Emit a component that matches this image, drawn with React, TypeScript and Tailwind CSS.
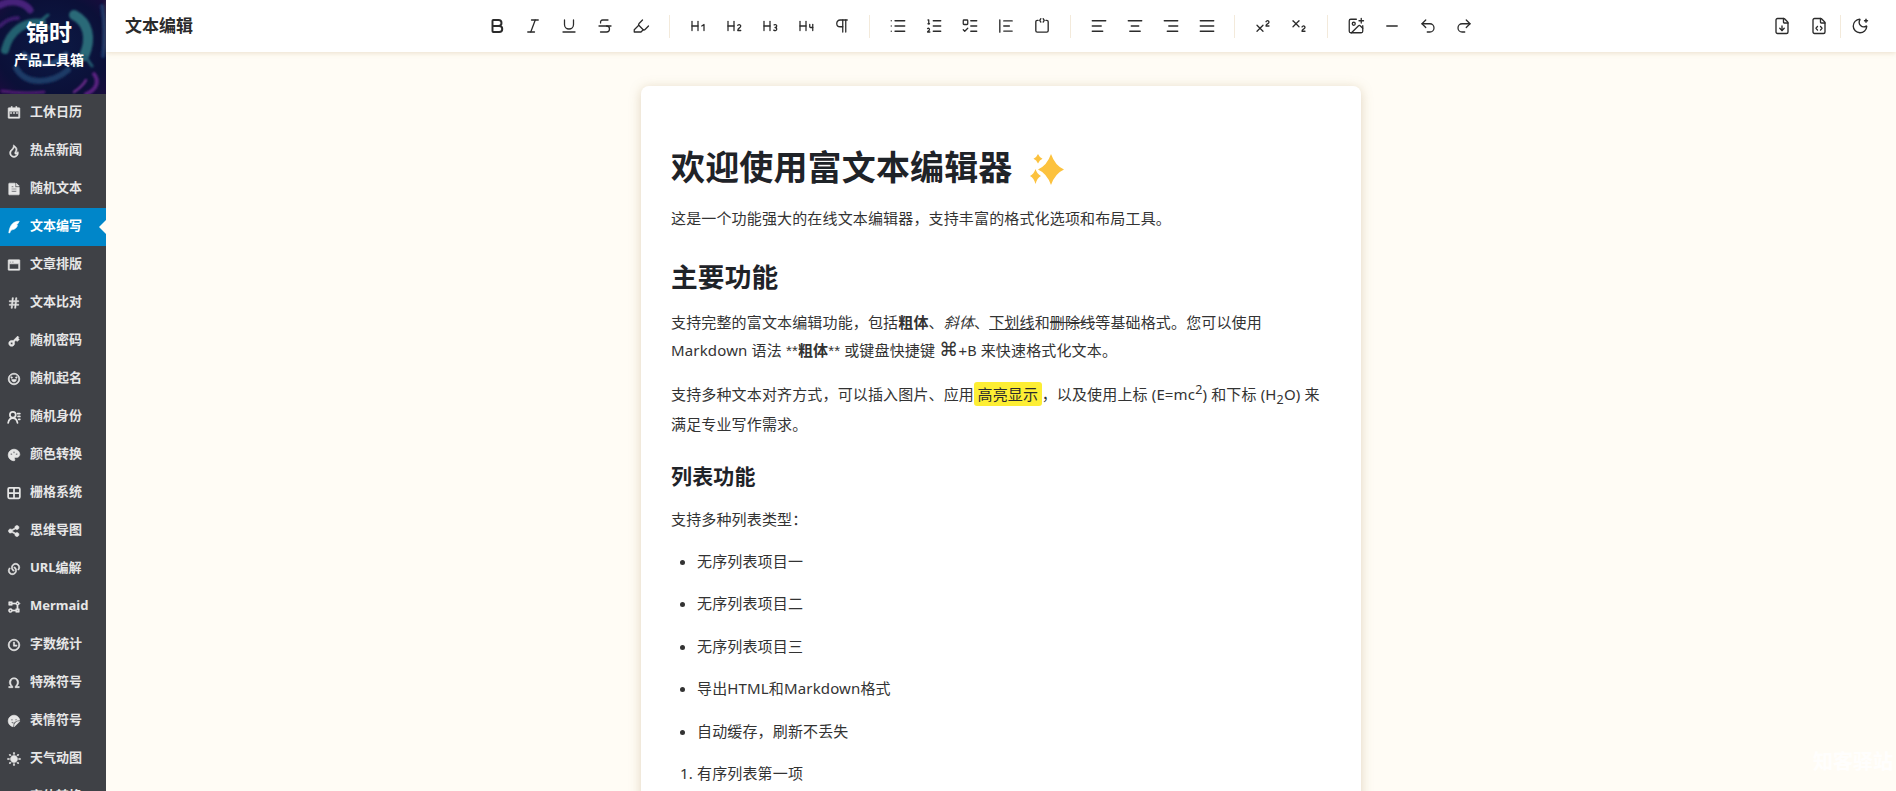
import React from 'react';
import {
  Bold, Italic, Underline, Strikethrough, Highlighter, Heading1, Heading2, Heading3, Heading4, Pilcrow,
  List, ListOrdered, ListTodo, AlignLeft, AlignCenter, AlignRight, AlignJustify, Superscript, Subscript,
  ImagePlus, Minus, Undo2, Redo2, FileDown, FileCode, MoonStar,
} from 'lucide-react';
import {
  RiCalendar2Fill, RiFireLine, RiFileTextFill, RiQuillPenFill, RiWindowFill, RiHashtag, RiKey2Fill,
  RiEmotionLine, RiPaletteFill, RiShareFill, RiLinksLine, RiFlowChart,
  RiTimeLine, RiOmega, RiEmojiStickerFill, RiSunFill, RiFontSize,
} from 'react-icons/ri';

type IconProps = { className?: string; strokeWidth?: number };

const BlockquoteIcon = ({ className }: IconProps) => (
  <svg viewBox="0 0 16 16" fill="none" stroke="currentColor" strokeWidth="1.2" strokeLinecap="round" className={className}>
    <path d="M2.500 2.500v11M6 3.500h7.500M6 8h5M6 12.500h7.500" />
  </svg>
);

const CodeBlockIcon = ({ className }: IconProps) => (
  <svg viewBox="0 0 16 16" fill="none" stroke="currentColor" strokeWidth="1.2" strokeLinecap="round" strokeLinejoin="round" className={className}>
    <path d="M4.500 3H3.800A1.300 1.300 0 0 0 2.500 4.300v7.900a1.300 1.300 0 0 0 1.300 1.300h8.400a1.300 1.300 0 0 0 1.300-1.300V4.300A1.300 1.300 0 0 0 12.200 3h-.7" />
    <path d="M7 1.500 6 3l1 1.500M9 1.500 10 3 9 4.500" />
  </svg>
);

const UserListIcon = ({ className }: IconProps) => (
  <svg viewBox="0 0 24 24" fill="none" stroke="currentColor" strokeWidth="3" strokeLinecap="round" className={className}>
    <circle cx="10" cy="8" r="5" />
    <path d="M2 22c1-5 4-8 8-8s7 3 8 8M18 6h4M19 11h3M20 16h2" />
  </svg>
);

const GridIcon = ({ className }: IconProps) => (
  <svg viewBox="0 0 24 24" fill="none" stroke="currentColor" strokeWidth="3" className={className}>
    <rect x="2" y="3" width="20" height="18" rx="2" />
    <path d="M12 3v18M2 12h20" />
  </svg>
);

const toolGroups = [
  [Bold, Italic, Underline, Strikethrough, Highlighter],
  [Heading1, Heading2, Heading3, Heading4, Pilcrow],
  [List, ListOrdered, ListTodo, BlockquoteIcon, CodeBlockIcon],
  [AlignLeft, AlignCenter, AlignRight, AlignJustify],
  [Superscript, Subscript],
  [ImagePlus, Minus, Undo2, Redo2],
];

const navItems = [
  { label: '工休日历', icon: RiCalendar2Fill },
  { label: '热点新闻', icon: RiFireLine },
  { label: '随机文本', icon: RiFileTextFill },
  { label: '文本编写', icon: RiQuillPenFill, active: true },
  { label: '文章排版', icon: RiWindowFill },
  { label: '文本比对', icon: RiHashtag },
  { label: '随机密码', icon: RiKey2Fill },
  { label: '随机起名', icon: RiEmotionLine },
  { label: '随机身份', icon: UserListIcon },
  { label: '颜色转换', icon: RiPaletteFill },
  { label: '栅格系统', icon: GridIcon },
  { label: '思维导图', icon: RiShareFill },
  { label: 'URL编解', icon: RiLinksLine },
  { label: 'Mermaid', icon: RiFlowChart },
  { label: '字数统计', icon: RiTimeLine },
  { label: '特殊符号', icon: RiOmega },
  { label: '表情符号', icon: RiEmojiStickerFill },
  { label: '天气动图', icon: RiSunFill },
  { label: '字体转换', icon: RiFontSize },
];

const LogoArt = () => (
  <svg viewBox="0 0 106 94" preserveAspectRatio="none" className="absolute inset-0 h-full w-full">
    <defs>
      <radialGradient id="logoBg" cx="50%" cy="50%" r="75%">
        <stop offset="0%" stopColor="#0c1a45" />
        <stop offset="70%" stopColor="#0b1038" />
        <stop offset="100%" stopColor="#1d0c3e" />
      </radialGradient>
      <filter id="soft"><feGaussianBlur stdDeviation="1.300" /></filter>
    </defs>
    <rect width="106" height="94" fill="url(#logoBg)" />
    <g filter="url(#soft)" fill="none" strokeLinecap="round">
      <path d="M0 5C12 -1 24 2 30 10" stroke="#46207a" strokeWidth="7" />
      <path d="M0 26C6 20 12 18 18 18" stroke="#3a1c6c" strokeWidth="4" />
      <path d="M5 50C10 30 26 20 42 23" stroke="#24606f" strokeWidth="8" />
      <path d="M38 23L48 15M40 25L50 28" stroke="#24606f" strokeWidth="3" />
      <path d="M74 15C88 22 92 38 84 56" stroke="#296a78" strokeWidth="10" />
      <path d="M84 56L76 66M85 56L92 66" stroke="#245a70" strokeWidth="3" />
      <path d="M16 68C26 86 52 84 68 70" stroke="#1d3a66" strokeWidth="6" />
      <path d="M24 54C36 68 56 66 66 54" stroke="#284a76" strokeWidth="5" />
      <path d="M94 74C100 82 96 90 86 94" stroke="#5a2180" strokeWidth="4" />
      <path d="M74 92C80 88 84 84 86 80" stroke="#6d2a8c" strokeWidth="2.500" />
      <path d="M2 91C20 94 36 93 44 92" stroke="#4d1f70" strokeWidth="3" />
      <path d="M102 6C105 24 105 40 103 56" stroke="#1a3566" strokeWidth="4" />
    </g>
  </svg>
);

const Sparkles = () => (
  <svg viewBox="0 0 34 31" className="ml-[17px] inline-block h-[31px] w-[34px] align-[-5px]">
    <path d="M21 0Q25 11.500 34 15.500Q25 19.500 21 31Q17 19.500 8 15.500Q17 11.500 21 0Z" fill="#fcc23e" />
    <path d="M8 0Q9.500 3.500 12.500 4.800Q9.500 6 8 9.500Q6.500 6 3.500 4.800Q6.500 3.500 8 0Z" fill="#fcc23e" />
    <path d="M5.500 15Q7 20 11 22Q7 24 5.500 30Q4 24 0 22Q4 20 5.500 15Z" fill="#fcc23e" />
  </svg>
);

const Sidebar = () => (
  <aside className="flex h-full w-[106px] shrink-0 flex-col overflow-hidden bg-[#3f4146]">
    <div className="relative flex h-[94px] shrink-0 flex-col items-center pr-2 pt-[17px] text-white">
      <LogoArt />
      <div className="relative text-[23px] font-bold leading-[30px]">锦时</div>
      <div className="relative mt-[3px] text-[14px] font-bold leading-[20px]">产品工具箱</div>
    </div>
    {navItems.map(({ label, icon: Icon, active }) => (
      <div
        key={label}
        className={`relative flex h-[38px] shrink-0 items-center pl-[7px] text-[13px] font-bold ${active ? 'bg-[#0086c9] text-white' : 'text-[#e6e6e6]'}`}
      >
        <Icon className="mr-[9px] h-[14px] w-[14px]" strokeWidth={1} />
        <span className="-translate-y-[1.500px]">{label}</span>
        {active && (
          <span className="absolute right-0 top-1/2 -translate-y-1/2 border-y-[7px] border-r-[7px] border-y-transparent border-r-[#fffcf5]" />
        )}
      </div>
    ))}
  </aside>
);

const Toolbar = () => (
  <header className="relative z-10 flex h-[52px] shrink-0 items-center bg-white pl-[19px] pr-[21px] shadow-[0_1px_5px_rgba(190,160,110,0.3)]">
    <h1 className="w-[357px] text-[17px] font-bold text-[#2b2b2b]">文本编辑</h1>
    <div className="flex items-center">
      {toolGroups.map((group, i) => (
        <React.Fragment key={i}>
          {i > 0 && <div className="mx-[12.750px] h-[23px] w-px bg-[#f3eadb]" />}
          <div className="flex items-center gap-[6px]">
            {group.map((Icon, j) => (
              <button key={j} className="flex h-[30px] w-[30px] items-center justify-center text-[#2b2b2b]">
                <Icon className="h-[18px] w-[18px]" strokeWidth={Icon === Bold ? 2.6 : 1.7} />
              </button>
            ))}
          </div>
        </React.Fragment>
      ))}
    </div>
    <div className="ml-auto flex items-center">
      <button className="flex h-[30px] w-[30px] items-center justify-center text-[#2b2b2b]">
        <FileDown className="h-[18px] w-[18px]" strokeWidth={1.8} />
      </button>
      <button className="ml-[7px] flex h-[30px] w-[30px] items-center justify-center text-[#2b2b2b]">
        <FileCode className="h-[18px] w-[18px]" strokeWidth={1.8} />
      </button>
      <div className="ml-[6px] h-[23px] w-px bg-[#f3eadb]" />
      <button className="ml-[4px] flex h-[30px] w-[30px] items-center justify-center text-[#2b2b2b]">
        <MoonStar className="h-[18px] w-[18px]" strokeWidth={1.8} />
      </button>
    </div>
  </header>
);

const Stars = () => <span className="font-['Liberation_Sans']">**</span>;

const Document = () => (
  <article className="mx-auto mt-[34px] w-[720px] rounded-[8px] bg-white px-[30px] pb-10 pt-[57px] text-[15px] leading-[27px] tracking-[0.01em] text-[#333333] shadow-[0_2px_12px_rgba(170,140,90,0.35)]">
    <h2 className="mb-[14px] text-[34px] font-bold leading-[48px] text-[#1f2328]">
      欢迎使用富文本编辑器<Sparkles />
    </h2>
    <p>这是一个功能强大的在线文本编辑器，支持丰富的格式化选项和布局工具。</p>
    <h3 className="mb-[13px] mt-[25.500px] text-[26.700px] font-bold leading-[38px] text-[#1f2328]">主要功能</h3>
    <p>
      支持完整的富文本编辑功能，包括<strong>粗体</strong>、<em>斜体</em>、<u>下划线</u>和<s>删除线</s>等基础格式。您可以使用 Markdown 语法 <Stars /><strong>粗体</strong><Stars /> 或键盘快捷键{' '}
      <kbd className="font-['Liberation_Mono','DejaVu_Sans',monospace] text-[15px]"><span className="font-['DejaVu_Sans'] text-[19px]">⌘</span>+B</kbd> 来快速格式化文本。
    </p>
    <p className="mt-[15px]">
      支持多种文本对齐方式，可以插入图片、应用
      <mark className="rounded-[3px] bg-[#fdee34] px-[3.500px] py-[2px] text-[#2b2b2b]">高亮显示</mark>
      ，以及使用上标 (E=mc<sup className="static align-super text-[12.500px] leading-[18px]">2</sup>) 和下标 (H<sub className="static align-sub text-[12.500px] leading-[22px]">2</sub>O) 来<br />
      满足专业写作需求。
    </p>
    <h4 className="mb-[15px] mt-[23px] text-[21px] font-bold leading-[30px] text-[#1f2328]">列表功能</h4>
    <p>支持多种列表类型：</p>
    <ul className="mt-[15px] list-disc pl-[26px]">
      {['无序列表项目一', '无序列表项目二', '无序列表项目三', '导出HTML和Markdown格式', '自动缓存，刷新不丢失'].map((t) => (
        <li key={t} className="mb-[15.600px]">{t}</li>
      ))}
    </ul>
    <ol className="list-decimal pl-[26px]">
      {['有序列表第一项', '有序列表第二项'].map((t) => (
        <li key={t} className="mb-[15.600px]">{t}</li>
      ))}
    </ol>
  </article>
);

export default function App() {
  return (
    <div className="relative flex h-screen overflow-hidden bg-[#fffcf5] font-['Noto_Sans','Noto_Sans_CJK_SC',sans-serif]">
      <Sidebar />
      <main className="flex min-w-0 flex-1 flex-col">
        <Toolbar />
        <div className="min-h-0 flex-1 overflow-hidden">
          <Document />
        </div>
      </main>
      <div className="pointer-events-none absolute bottom-[14px] right-[3px] text-[20px] font-bold text-white/80">知客驿站</div>
    </div>
  );
}
